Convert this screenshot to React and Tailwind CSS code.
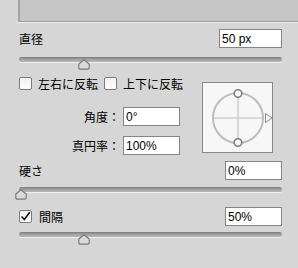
import React from "react";

const Thumb = ({ pos }) => (
  <svg
    className={`absolute top-[2px] ${pos}`}
    width="12"
    height="11"
    viewBox="0 0 12 11"
  >
    <path
      d="M6 0.8 L11.2 5 L11.2 8.5 Q11.2 10.2 9.5 10.2 L2.5 10.2 Q0.8 10.2 0.8 8.5 L0.8 5 Z"
      fill="#dadada"
      stroke="#7b7b7b"
      strokeWidth="1.2"
      strokeLinejoin="round"
    />
  </svg>
);

const Slider = ({ pos }) => (
  <div className="relative h-[13px]">
    <div className="h-[5px] rounded-full bg-gradient-to-b from-[#7c7c7c] via-[#a2a2a2] to-[#b8b8b8] shadow-[0_1px_0_#eeeeee]" />
    <Thumb pos={pos} />
  </div>
);

const Field = ({ value, className = "" }) => (
  <div
    className={`h-[19px] border border-[#858585] bg-white pl-[2px] flex items-center font-['Liberation_Sans',sans-serif] text-[12px] text-black ${className}`}
  >
    {value}
  </div>
);

const Check = ({ checked }) => (
  <div className="w-[13px] h-[13px] border border-[#7a7a7a] rounded-[2px] bg-gradient-to-b from-[#f2f2f2] to-[#fdfdfd] flex items-center justify-center shrink-0">
    {checked && (
      <svg width="11" height="11" viewBox="0 0 11 11">
        <path
          d="M1.5 5.5 L4.3 8.6 L9.8 1.2"
          fill="none"
          stroke="#111"
          strokeWidth="1.6"
        />
      </svg>
    )}
  </div>
);

export default function App() {
  return (
    <div className="w-[298px] h-[268px] bg-[#d6d6d6] overflow-hidden text-[12px] leading-none text-black font-['Noto_Sans_CJK_JP',sans-serif]">
      {/* top panel */}
      <div className="ml-[18px] h-[22px] bg-[#c6c6c6] border-l-2 border-l-[#a4a4a4] border-b border-b-[#9d9d9d]" />
      <div className="ml-[17px] h-px bg-[#eeeeee]" />

      <div className="pl-[19px] pr-[16px]">
        {/* 直径 */}
        <div className="mt-[6px] h-[19px] flex items-center justify-between">
          <span>直径</span>
          <Field value="50 px" className="w-[63px]" />
        </div>
        <div className="mt-[9px]">
          <Slider pos="left-[59px]" />
        </div>

        {/* flip / angle / roundness */}
        <div className="mt-[6px] flex items-start">
          <div className="w-[183px]">
            <div className="h-[15px] flex items-center">
              <Check />
              <span className="ml-[6px]">左右に反転</span>
              <span className="ml-[6px]">
                <Check />
              </span>
              <span className="ml-[6px]">上下に反転</span>
            </div>
            <div className="mt-[16px] flex items-center">
              <span className="w-[101px] text-right">角度：</span>
              <Field value="0°" className="ml-[3px] w-[57px]" />
            </div>
            <div className="mt-[10px] flex items-center">
              <span className="w-[101px] text-right">真円率：</span>
              <Field value="100%" className="ml-[3px] w-[57px]" />
            </div>
          </div>
          <div className="mt-[6px] w-[71px] h-[71px] border border-[#898989] bg-[#f7f7f7]">
            <svg width="69" height="69" viewBox="0 0 69 69">
              <line x1="10" y1="35" x2="60" y2="35" stroke="#cfcfcf" strokeWidth="1.5" />
              <line x1="35" y1="11" x2="35" y2="60" stroke="#cfcfcf" strokeWidth="1.5" />
              <circle cx="35" cy="35" r="25" fill="none" stroke="#bdbdbd" strokeWidth="2" />
              <circle cx="35" cy="10.5" r="3.8" fill="#f7f7f7" stroke="#7e7e7e" strokeWidth="1.6" />
              <circle cx="35" cy="59.5" r="3.8" fill="#f7f7f7" stroke="#7e7e7e" strokeWidth="1.6" />
              <path d="M62.5 30.5 L69 35 L62.5 39.5 Z" fill="#f7f7f7" stroke="#8a8a8a" strokeWidth="1" />
            </svg>
          </div>
        </div>

        {/* 硬さ */}
        <div className="mt-[6px] h-[19px] flex items-center justify-between">
          <span>硬さ</span>
          <Field value="0%" className="w-[57px]" />
        </div>
        <div className="mt-[7px]">
          <Slider pos="left-[-4px]" />
        </div>

        {/* 間隔 */}
        <div className="mt-[7px] h-[19px] flex items-center justify-between">
          <div className="flex items-center">
            <Check checked />
            <span className="ml-[7px]">間隔</span>
          </div>
          <Field value="50%" className="w-[57px]" />
        </div>
        <div className="mt-[6px]">
          <Slider pos="left-[59px]" />
        </div>
      </div>
    </div>
  );
}
